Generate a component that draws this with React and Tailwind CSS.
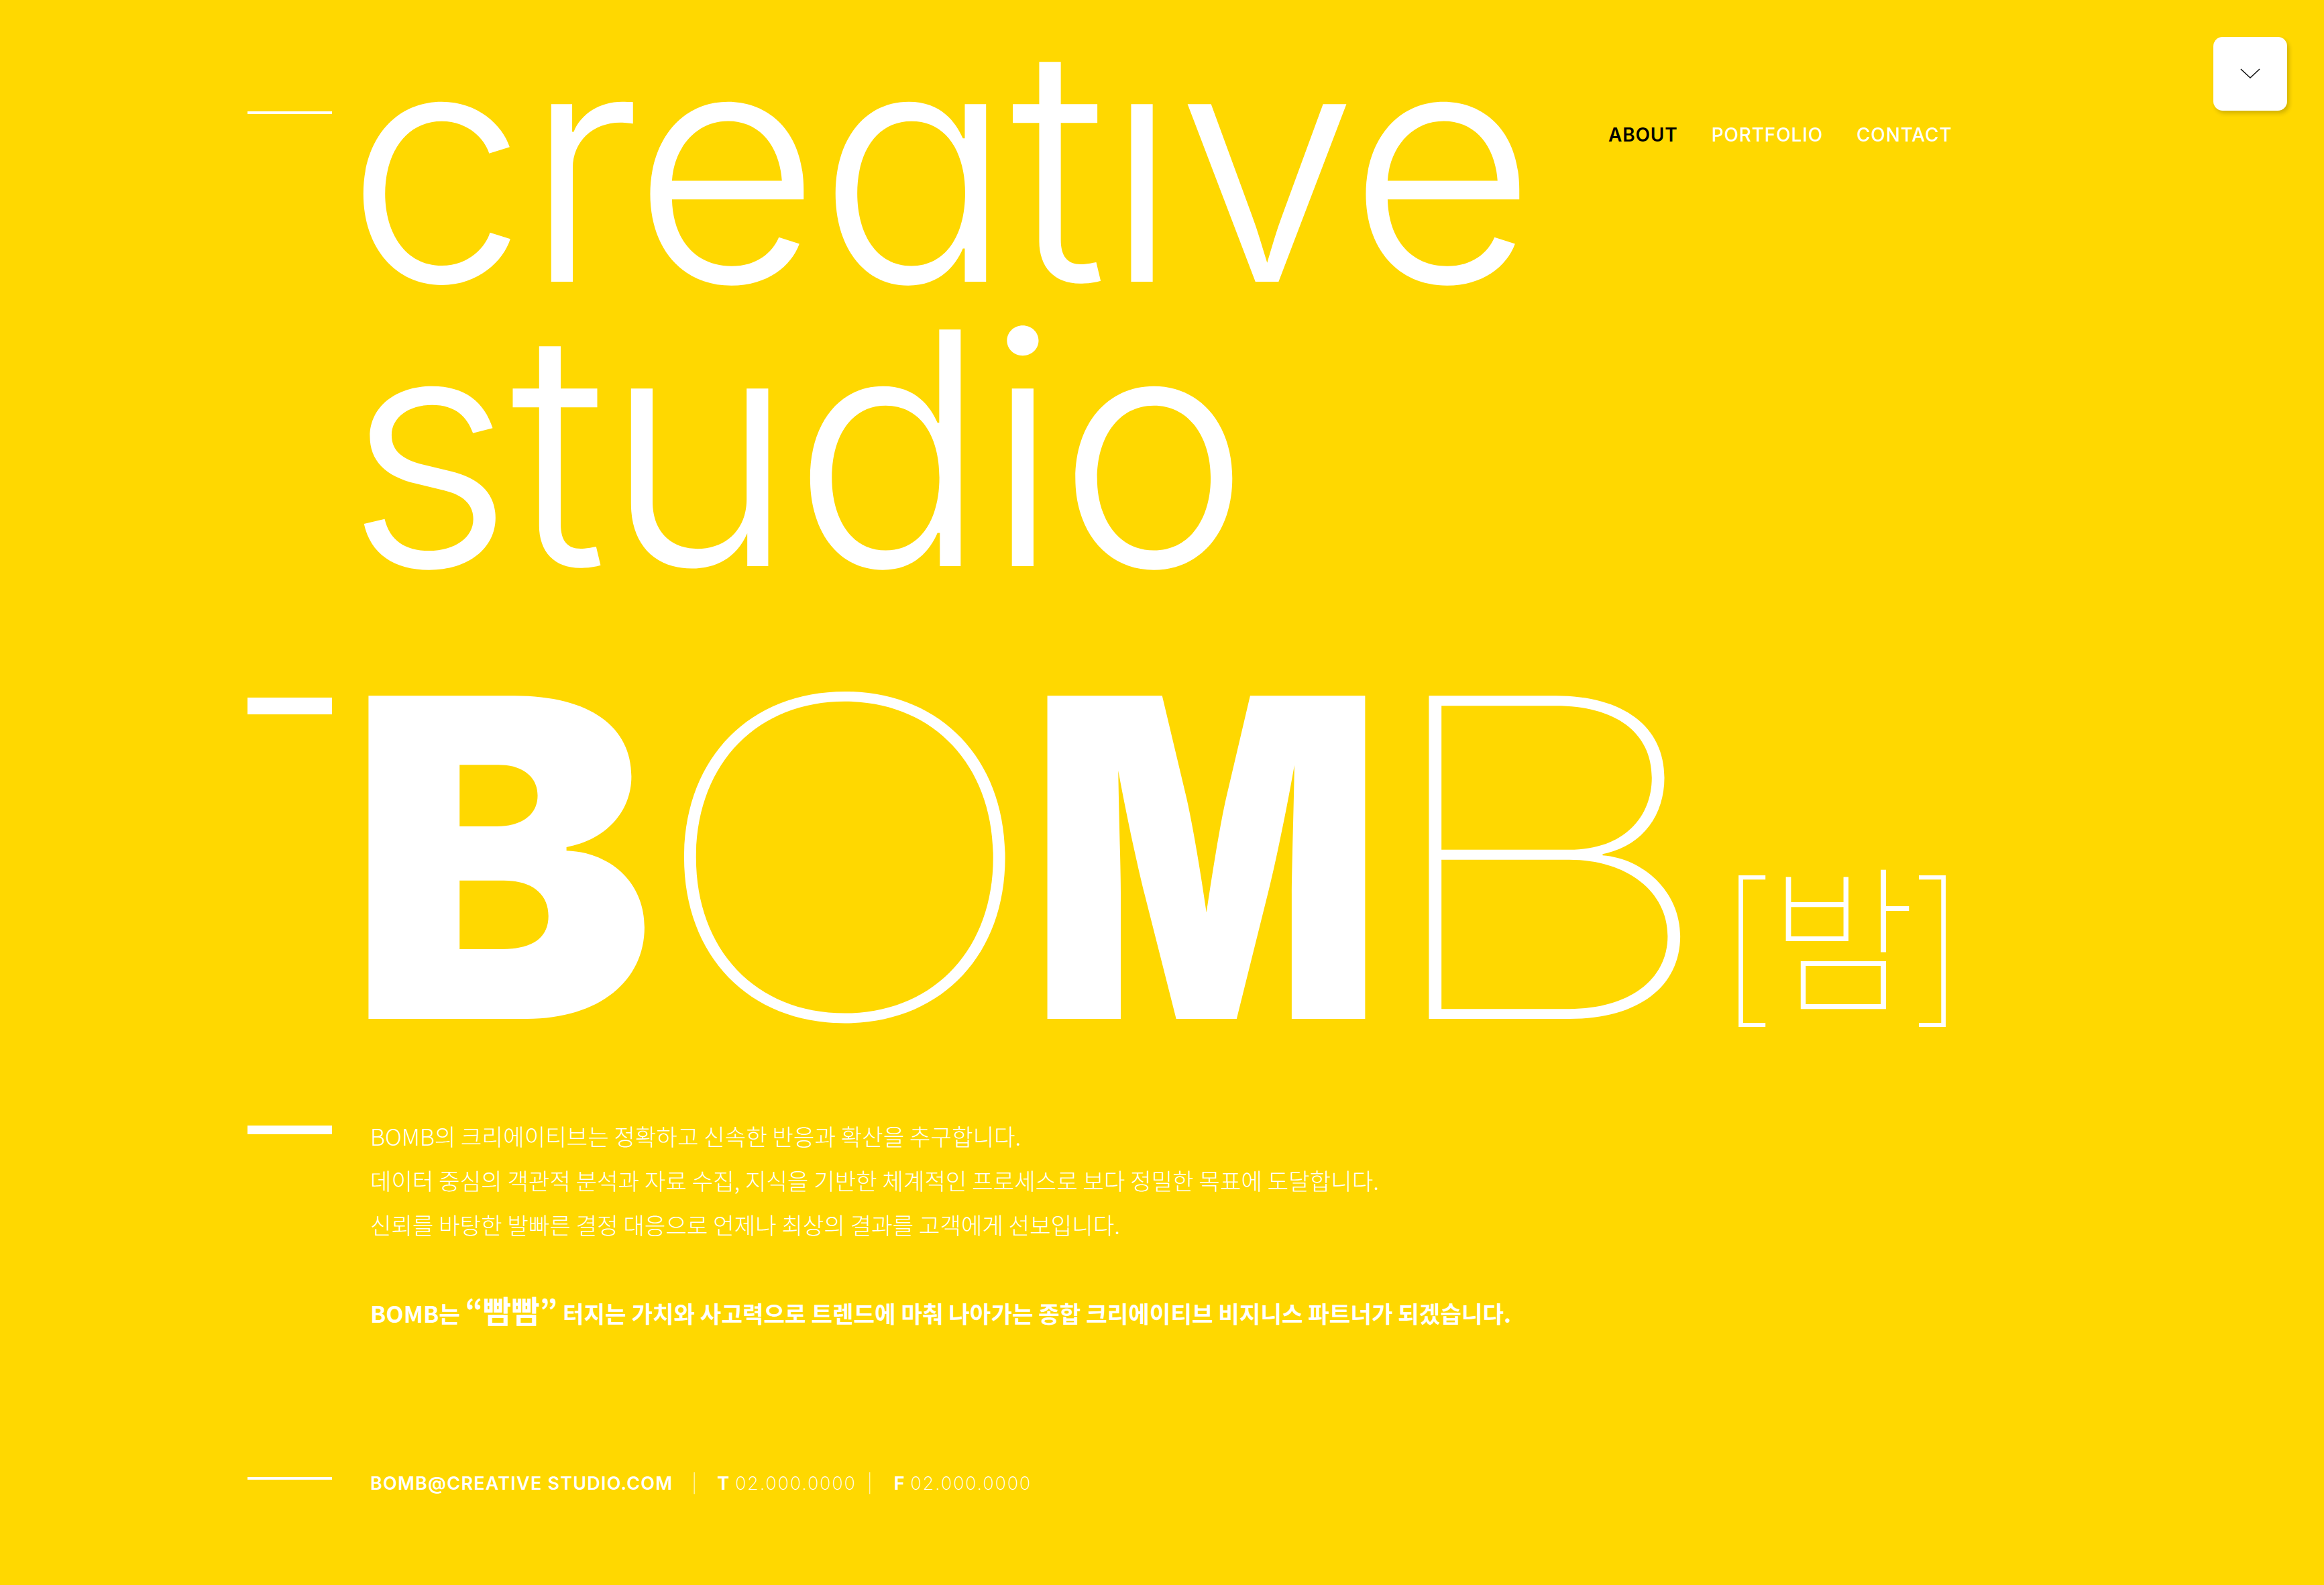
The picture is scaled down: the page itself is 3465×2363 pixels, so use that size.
import React from 'react';

const Dash = ({ className = '' }) => (
  <div className={`w-[126px] flex-none bg-white ${className}`}></div>
);

const ChevronDown = ({ className = 'w-[30px] h-[16px]' }) => (
  <svg viewBox="0 0 30 16" fill="none" className={className}>
    <path d="M1 1 L15 14 L29 1" stroke="#111" strokeWidth="1.6" />
  </svg>
);

// each logo letter sits in a fixed box so the mixed weights line up like the wordmark
const Letter = ({ box, className, children }) => (
  <span className={`flex flex-none justify-center ${box}`}>
    <span className={className}>{children}</span>
  </span>
);

export default function App() {
  return (
    <div className="relative w-[3465px] h-[2363px] overflow-hidden bg-[#ffd800] pl-[369px] pt-[32px] font-['Inter',sans-serif] text-white">
      {/* Menu toggle */}
      <button className="absolute right-[55px] top-[55px] flex h-[110px] w-[110px] items-center justify-center rounded-[14px] bg-white shadow-[3px_4px_6px_rgba(0,0,0,0.18)]">
        <ChevronDown />
      </button>

      {/* Headline */}
      <section className="flex">
        <Dash className="mt-[134px] h-[4px]" />
        <h1 className="ml-[20px] w-[1883px] flex-none text-[485px] font-[360] leading-[424px] tracking-[-0.01em] [font-feature-settings:'cv11']">
          creatıve
          <br />
          studio
        </h1>
        <nav className="mt-[149px] flex gap-[50px] text-[28px] font-semibold leading-[40px] tracking-[0.03em]">
          <a className="text-black">ABOUT</a>
          <a className="font-medium">PORTFOLIO</a>
          <a className="font-medium">CONTACT</a>
        </nav>
      </section>

      {/* BOMB */}
      <section className="mt-[68px] flex">
        <Dash className="mt-[92px] h-[25px]" />
        <div className="ml-[53px] flex h-[662px] items-baseline text-[662px] leading-none">
          <Letter box="w-[399px]" className="font-black scale-x-[1.04]">B</Letter>
          <Letter box="w-[607px]" className="ml-[18px] font-thin scale-x-[1.2]">O</Letter>
          <Letter box="w-[489px]" className="font-black scale-x-[0.83]">M</Letter>
          <Letter box="w-[520px]" className="font-thin scale-x-[1.26]">B</Letter>
          <span className="relative -top-[28px] ml-[3px] font-['Noto_Sans_CJK_KR',sans-serif] text-[238px] font-thin tracking-[0em]">[밤]</span>
        </div>
      </section>

      {/* Intro */}
      <section className="mt-[50px] flex">
        <Dash className="mt-[18px] h-[13px]" />
        <div className="ml-[57px] font-['Noto_Sans_CJK_KR',sans-serif] text-[34.3px] font-light leading-[66px]">
          <p>BOMB의 크리에이티브는 정확하고 신속한 반응과 확산을 추구합니다.</p>
          <p>데이터 중심의 객관적 분석과 자료 수집, 지식을 기반한 체계적인 프로세스로 보다 정밀한 목표에 도달합니다.</p>
          <p>신뢰를 바탕한 발빠른 결정 대응으로 언제나 최상의 결과를 고객에게 선보입니다.</p>
          <p>&nbsp;</p>
          <p className="font-bold">
            BOMB는 <span className="text-[46px] leading-[40px]">“빰빰”</span> 터지는 가치와 사고력으로 트렌드에 마춰 나아가는 종합 크리에이티브 비지니스 파트너가 되겠습니다.
          </p>
        </div>
      </section>

      {/* Contact */}
      <section className="mt-[202px] flex">
        <Dash className="mt-[10px] h-[4px]" />
        <div className="ml-[57px] flex items-center text-[27px] leading-[40px]">
          <span className="font-semibold tracking-[0.045em]">BOMB@CREATIVE STUDIO.COM</span>
          <span className="ml-[28px] font-extralight opacity-80">|</span>
          <span className="ml-[30px] flex gap-[8px] tracking-[0.03em]">
            <span className="font-bold">T</span>
            <span className="font-extralight tracking-[0.07em]">02.000.0000</span>
          </span>
          <span className="ml-[16px] font-extralight opacity-80">|</span>
          <span className="ml-[32px] flex gap-[8px] tracking-[0.03em]">
            <span className="font-bold">F</span>
            <span className="font-extralight tracking-[0.07em]">02.000.0000</span>
          </span>
        </div>
      </section>
    </div>
  );
}
